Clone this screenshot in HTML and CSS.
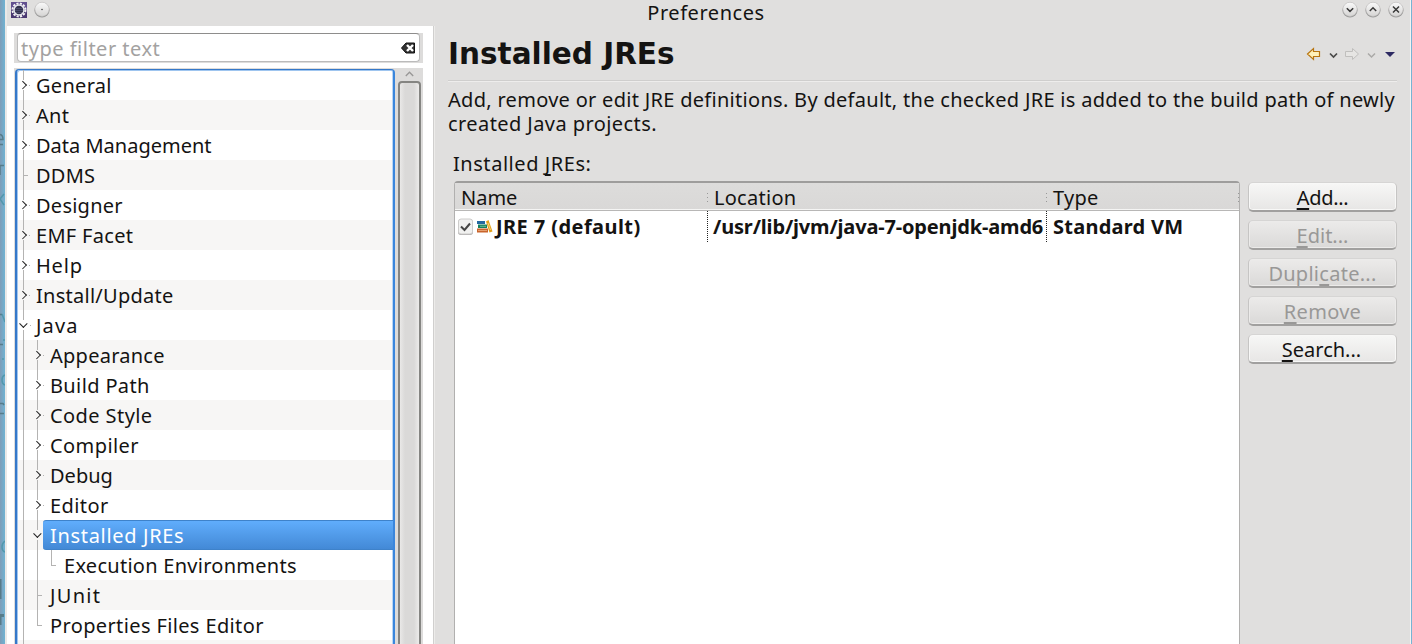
FILE: index.html
```
<!DOCTYPE html>
<html lang="en">
<head>
<meta charset="utf-8">
<title>Preferences</title>
<link rel="stylesheet" href="styles.css">
</head>
<body>
<div class="desktop">
  <svg class="behind" width="5" height="644" viewBox="0 0 5 644"><g fill="none" stroke="#4c6f78" stroke-width="1.500"><path d="M0 134.500Q3 135 3 139.500H0M0 144.500H3M0 165.500H4M0 165v10M0 314.500H2M0 344.500H3M0 403.500H3L4 405M0 413.500H4" opacity=".75"/><path d="M4 194 0 199l4 6M2 314l3 8M4 339v2M3 358v2M5 375Q2 376 2 380t3 5M5 541Q2 543 2 547t3 5" stroke="#4792a4" opacity=".75"/><path d="M0 579v20M0 615.500H4M0 615v10" stroke-width="3" opacity=".75"/></g></svg>
  <div class="window">
    <header class="titlebar">
      <div class="title-left">
        <svg class="app-icon" width="16" height="16" viewBox="0 0 16 16"><rect width="16" height="16" fill="#62508f"/><rect y="8" width="16" height="8" fill="#493770"/><circle cx="8" cy="8" r="6.500" fill="none" stroke="#f4f4f4" stroke-width="2" stroke-dasharray="2.200 1.200"/><circle cx="8" cy="8" r="5" fill="#33334e" stroke="#e6e6ed" stroke-width="1.500"/><path d="M4.500 6.500h7M4 8.500h8M5 10.500h6" stroke="#515174" stroke-width=".8"/></svg>
        <svg class="round" width="16" height="18" viewBox="0 0 16 18"><use href="#knob"/><circle cx="8" cy="8.500" r=".8" fill="#444"/></svg>
      </div>
      <h1 class="title"><span class="fit-title">Preferences</span></h1>
      <div class="title-right">
        <svg class="round" width="16" height="18" viewBox="0 0 16 18"><defs><linearGradient id="kg" x2="0" y2="1"><stop stop-color="#fafafa"/><stop offset="1" stop-color="#d5d4d3"/></linearGradient><g id="knob"><circle cx="8" cy="9" r="7.600" fill="#9a9a99"/><circle cx="8" cy="8.300" r="7.100" fill="url(#kg)" stroke="#b8b7b6" stroke-width=".5"/></g></defs><use href="#knob"/><path d="M4.800 7.200 8 10.400 11.200 7.200" class="knob-line"/></svg>
        <svg class="round" width="16" height="18" viewBox="0 0 16 18"><use href="#knob"/><path d="M4.800 10 8 6.800 11.200 10" class="knob-line"/></svg>
        <svg class="round" width="16" height="18" viewBox="0 0 16 18"><use href="#knob"/><path d="M5 5.500 11 11.500M11 5.500 5 11.500" class="knob-line"/></svg>
      </div>
    </header>
    <div class="content">
      <aside class="sidebar">
        <div class="filter"><div class="filter-box"><span class="fit-filter">type filter text</span>
          <svg width="14" height="12" viewBox="0 0 14 12"><path d="M.5 6 5 1h8.500v10H5Z" fill="#333" stroke="#111"/><path d="M6 3 12 9M12 3 6 9" stroke="#fff" stroke-width="2.400"/></svg></div></div>
        <div class="tree-area">
          <ul class="tree">
            <li class="row"><i class="arrow"></i><span class="w-general">General</span></li>
            <li class="row"><i class="arrow"></i><span class="w-ant">Ant</span></li>
            <li class="row"><i class="arrow"></i><span class="w-data">Data Management</span></li>
            <li class="row"><i class="leaf"></i><span class="w-ddms">DDMS</span></li>
            <li class="row"><i class="arrow"></i><span class="w-designer">Designer</span></li>
            <li class="row"><i class="arrow"></i><span class="w-emf">EMF Facet</span></li>
            <li class="row"><i class="arrow"></i><span class="w-help">Help</span></li>
            <li class="row"><i class="arrow"></i><span class="w-install">Install/Update</span></li>
            <li class="row"><i class="arrow open"></i><span class="w-java">Java</span></li>
            <li class="row"><i class="rail"></i><i class="arrow"></i><span class="w-app">Appearance</span></li>
            <li class="row"><i class="rail"></i><i class="arrow"></i><span class="w-build">Build Path</span></li>
            <li class="row"><i class="rail"></i><i class="arrow"></i><span class="w-code">Code Style</span></li>
            <li class="row"><i class="rail"></i><i class="arrow"></i><span class="w-comp">Compiler</span></li>
            <li class="row"><i class="rail"></i><i class="arrow"></i><span class="w-debug">Debug</span></li>
            <li class="row"><i class="rail"></i><i class="arrow"></i><span class="w-editor">Editor</span></li>
            <li class="row selected"><i class="rail"></i><i class="arrow open"></i><span class="w-jres">Installed JREs</span></li>
            <li class="row"><i class="rail"></i><i class="rail"></i><i class="leaf last"></i><span class="w-exec">Execution Environments</span></li>
            <li class="row"><i class="rail"></i><i class="leaf"></i><span class="w-junit">JUnit</span></li>
            <li class="row"><i class="rail"></i><i class="leaf last"></i><span class="w-prop">Properties Files Editor</span></li>
            <li class="row"><i class="rail"></i></li>
          </ul>
          <div class="scrollbar"><svg width="9" height="6" viewBox="0 0 9 6"><path d="M.8 5 4.500 1.200 8.200 5" fill="none" stroke="#989796" stroke-width="1.300"/></svg><div class="thumb"></div></div>
        </div>
      </aside>
      <main class="page">
        <div class="page-head">
          <h2>Installed JREs</h2>
          <svg class="nav" width="90" height="14" viewBox="0 0 90 14"><path d="M1.500 7 7.500 1.500v3h6v5h-6v3Z" fill="#fff0b8" stroke="#b87510" stroke-width="1.200"/><path d="M24 6.500 27.500 10 31 6.500" fill="none" stroke="#4a4a49" stroke-width="1.700"/><path d="M52.500 7 46.500 1.500v3h-6v5h6v3Z" transform="translate(93 0) scale(-1 1) translate(0 0)" fill="none" stroke="none"/><path d="M52.500 7 46.500 1.500v3h-7v5h7v3Z" fill="#e6e5e3" stroke="#c0bfbd"/><path d="M62 6.500 65.500 10 69 6.500" fill="none" stroke="#aaa9a7" stroke-width="1.500"/><path d="M79 5h10l-5 5Z" fill="#2d2a62"/></svg>
        </div>
        <p class="desc"><span class="fit-d1">Add, remove or edit JRE definitions. By default, the checked JRE is added to the build path of newly</span><span class="fit-d2">created Java projects.</span></p>
        <div class="label"><span class="fit-label">Installed <u>J</u>REs:</span></div>
        <div class="body">
          <div class="table">
            <div class="thead"><div><span>Name</span></div><div><span class="w-loc">Location</span></div><div><span class="w-type">Type</span></div></div>
            <div class="trow">
              <div class="c1"><svg class="check" width="18" height="18" viewBox="0 0 18 18"><rect x="1" y="1.500" width="15" height="15.500" rx="3" fill="#aaa9a8"/><rect x="1.500" y="1" width="14" height="15" rx="2.500" fill="#f1f1f0" stroke="#cdcccb"/><path d="M4 8.500 7.500 12 13 5.500" fill="none" stroke="#464646" stroke-width="2"/></svg><svg class="books" width="16" height="13" viewBox="0 0 16 13"><path d="M0 1h8v3H0Z" fill="#2468a0"/><path d="M1 4.500h9v3.500H1Z" fill="#16805e"/><path d="M0 8.500h11v4H0Z" fill="#c9642c"/><path d="M3 6.300h6" stroke="#7cc9a4" stroke-width=".8"/><path d="M1 10.500h9" stroke="#eeb080" stroke-width=".8"/><path d="M9 1.500 11.500 0 15.500 11.500l-3 1Z" fill="#e4a019"/><path d="M11 3 13.500 10" stroke="#ffe09a" stroke-width=".8"/></svg><span class="w-jre7">JRE 7 (default)</span></div>
              <div class="c2"><span class="w-path">/usr/lib/jvm/java-7-openjdk-amd6</span></div>
              <div><span class="w-vm">Standard VM</span></div>
            </div>
          </div>
          <div class="buttons">
            <button><span class="w-add"><u>A</u>dd...</span></button>
            <button disabled><span><u>E</u>dit...</span></button>
            <button disabled><span class="w-dup">Dupli<u>c</u>ate...</span></button>
            <button disabled><span class="w-rem"><u>R</u>emove</span></button>
            <button><span class="w-search"><u>S</u>earch...</span></button>
          </div>
        </div>
      </main>
    </div>
  </div>
</div>
</body>
</html>
```
FILE: styles.css
```
* { box-sizing: border-box; }
body { margin: 0; font: 20px/24px "Noto Sans", sans-serif; color: #141312; }
h1, h2, p, ul { margin: 0; padding: 0; }
svg { display: block; flex: none; }
.desktop { height: 644px; overflow: hidden; padding-right: 1px; display: flex; background: linear-gradient(90deg, #7f9db8, #6fb3d3 5px, #76b4d4); }
.window { flex: 1; min-width: 0; height: 644px; background: #e0dfde; border-left: 2px solid #eae9e8; border-right: 1px solid #f4f4f3; display: flex; flex-direction: column; }
.titlebar { height: 26px; flex: none; display: grid; grid-template-columns: 1fr auto 1fr; align-items: start; padding: 1px 6px 0 4px; }
.title { font-size: 20px; font-weight: 400; line-height: 24px; }
.title-left { display: flex; gap: 7px; padding-top: 1px; }
.title-right { display: flex; gap: 7px; justify-content: flex-end; }
.title-left .round { margin-top: -1px; }
.knob-line { fill: none; stroke: #393939; stroke-width: 1.5; }
.content { flex: 1; min-height: 0; display: flex; }
.sidebar { width: 426px; flex: none; background: #fff; padding: 7px 10px 0 7px; display: flex; flex-direction: column; gap: 5px; }
.filter { height: 30px; flex: none; background: #dddcdb; padding: 0 3px; }
.filter-box { height: 29px; background: #fff; border: 1px solid #bbb; border-top-color: #8e8d8c; border-radius: 4px; padding: 0 4px 0 3px; display: flex; align-items: center; justify-content: space-between; color: #a3a2a1; }
.filter-box span { padding-top: 2px; }
.tree-area { height: 600px; flex: none; background: #dddcdb; display: flex; }
.tree { width: 380px; margin: 1px 0 0 1px; border: 2px solid #3578c9; border-top-width: 1px; border-right-color: #3a86dc; border-radius: 4px 4px 0 0; background: #fff; box-shadow: inset 1px 1px #9fc5ef, inset -1px 0 #b9d6f5; list-style: none; overflow: hidden; }
.row { height: 30px; display: flex; align-items: center; margin: 0 1px; white-space: nowrap; }
.row:nth-child(even) { background: #f7f6f5; }
.row span { padding-top: 2px; }
.rail, .leaf, .arrow { flex: none; align-self: stretch; width: 14px; background: linear-gradient(#b4b3b2, #b4b3b2) 5px 0 / 1px 100% no-repeat; }
.arrow, .leaf { width: 18px; display: flex; align-items: center; }
.leaf::before { content: ""; width: 5px; height: 1px; margin-left: 5px; background: #b4b3b2; }
.leaf.last { background-size: 1px 16px; }
.arrow { background: linear-gradient(#b4b3b2 10px, transparent 10px 20px, #b4b3b2 20px) 5px 0 / 1px 100% no-repeat; }
.arrow::before { content: ""; width: 4.5px; height: 4.5px; margin-left: 2px; border: solid #222; border-width: 1.6px 1.6px 0 0; transform: rotate(45deg); }
.arrow::after { content: ""; width: 1px; height: 1px; margin-left: 3px; background: #b4b3b2; }
.arrow.open::before { margin-left: 3px; transform: translateY(-1px) rotate(135deg); }
.row.selected span { flex: 1; align-self: stretch; margin: 0 -2px 0 -7px; padding: 1px 0 0 7px; color: #fff; background: linear-gradient(#60adfc, #4389d6); border: solid #3e82ca; border-width: 1px 0; border-radius: 3px 0 0 3px; line-height: 28px; }
.scrollbar { width: 25px; margin-left: 3px; display: flex; flex-direction: column; align-items: flex-start; padding-top: 3px; gap: 4px; }
.scrollbar svg { margin-left: 7px; }
.thumb { width: 23px; height: 600px; flex: none; border: 2px solid #858582; border-radius: 4px; background: linear-gradient(90deg, #e9e8e7, #dad9d8 5px, #dad9d8 14px, #ecebea); }
.page { flex: 1; min-width: 0; border-left: 1px solid #d0cfce; box-shadow: inset 1px 0 #edecea; padding: 0 13px 0 14px; display: flex; flex-direction: column; white-space: nowrap; }
.page-head { height: 55px; flex: none; border-bottom: 1px solid #cfcecd; box-shadow: 0 1px #eeedec; display: flex; justify-content: space-between; align-items: center; }
h2 { font: bold 29.5px/40px "DejaVu Sans", sans-serif; padding-top: 2px; }
.nav { margin: 1px 1px 0 0; }
.desc { padding-top: 7px; display: flex; flex-direction: column; }
.desc span, button span, .title span { display: block; }
.label { padding: 16px 0 5px 5px; }
.body { flex: 1; min-height: 0; display: flex; padding-left: 6px; gap: 8px; }
.table { width: 786px; flex: none; background: #fff; border: 1px solid #b1b0af; border-top: 2px solid #9e9d9c; border-bottom: 0; border-radius: 4px 4px 0 0; }
.thead, .trow { display: grid; grid-template-columns: 253px 339px 1fr; height: 31px; align-items: stretch; }
.thead { height: 28px; background: linear-gradient(#dddcdb, #d9d8d7); border-bottom: 1px solid #b8b7b6; box-shadow: inset 0 -1px #f5f5f4; }
.thead > div, .trow > div { display: flex; align-items: center; padding-left: 6px; }
.thead span { padding-top: 2px; }
.trow span { padding-top: 1px; }
.thead > div { background: repeating-linear-gradient(#999 0 1px, transparent 1px 4px) right 10px / 1px 9px no-repeat; }
.trow { font-weight: 700; }
.trow .c1 { padding-left: 2px; }
.trow .c2 { padding-left: 5px; }
.trow .c1, .trow .c2 { background: repeating-linear-gradient(#222 0 1px, transparent 1px 2px) right 0 / 1px 100% no-repeat; }
.books { margin: 0 3px 0 2px; }
.buttons { width: 149px; display: flex; flex-direction: column; gap: 8px; padding-top: 1px; }
button { height: 30px; padding: 0; border: 1px solid #c6c5c4; border-top-color: #d6d5d4; border-bottom: 2px solid #a1a09f; border-radius: 5px; background: linear-gradient(#f7f7f6, #e7e6e5); box-shadow: inset 0 0 0 1px #f8f8f7; font: 20px/24px "Noto Sans", sans-serif; color: #141312; display: flex; justify-content: center; align-items: center; }
button span { padding-top: 2px; }
button:disabled { color: #999897; background: linear-gradient(#ecebea, #dad9d8); box-shadow: inset 0 0 0 1px #ecebea; }
u { text-decoration-thickness: 2px; text-underline-offset: 3px; text-decoration-skip-ink: none; }

/* Tracking per label */
.fit-title { letter-spacing: .55px; margin-right: 3px; }
.fit-filter { letter-spacing: .5px; }
.fit-d1 { letter-spacing: .295px; }
.fit-d2 { letter-spacing: .42px; }
.fit-label { letter-spacing: .55px; }
.w-general, .w-emf, .w-type, .w-rem { letter-spacing: .3px; }
.w-ant, .w-ddms, .w-designer, .w-app, .w-vm { letter-spacing: .25px; }
.w-install, .w-exec, .w-loc, .w-dup { letter-spacing: .27px; }
.w-help { letter-spacing: .8px; }
.w-java { letter-spacing: 1.1px; }
.w-build, .w-prop { letter-spacing: .37px; }
.w-code, .w-comp, .w-editor, .w-jre7 { letter-spacing: .42px; }
.w-jres { letter-spacing: .68px; }
.w-junit { letter-spacing: 1.3px; }
.w-path { letter-spacing: -.16px; }
.w-add { letter-spacing: -.3px; }
.w-search { margin-right: 2px; }
```
